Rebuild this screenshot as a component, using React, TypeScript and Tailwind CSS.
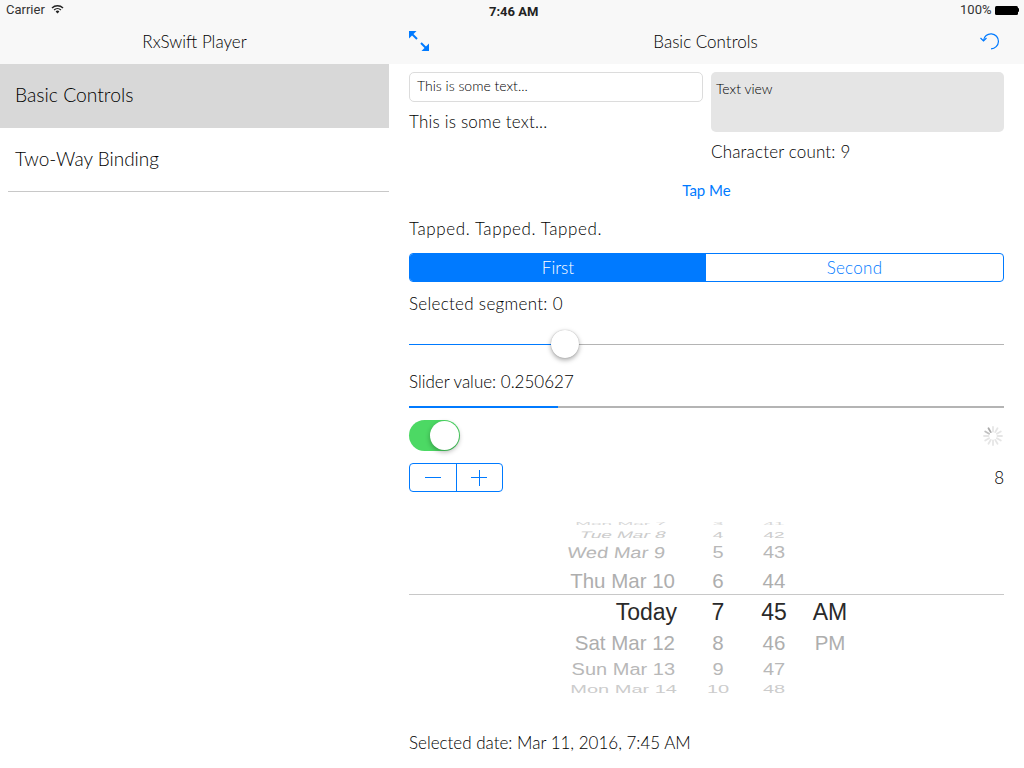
const font = "font-['Lato','Open_Sans',sans-serif] font-light";

const pickerRows = [
  { h: "h-[7px]", cls: "scale-y-[0.2] text-[#d8d8d8] text-[19px]", dateCls: "w-[257px]", date: "Mon Mar 7", hour: "3", min: "41", ap: "" },
  { h: "h-[14px]", cls: "scale-y-[0.5] text-[#cccccc] text-[19px]", dateCls: "w-[257px] -skew-x-12", date: "Tue Mar 8", hour: "4", min: "42", ap: "" },
  { h: "h-[24px]", cls: "scale-y-[0.78] text-[#b8b8b8] text-[20px]", dateCls: "w-[256px] -skew-x-6", date: "Wed Mar 9", hour: "5", min: "43", ap: "" },
  { h: "h-[32px]", cls: "scale-y-[0.95] text-[#aeaeae] text-[20.5px]", dateCls: "w-[266px]", date: "Thu Mar 10", hour: "6", min: "44", ap: "" },
  { h: "h-[30px]", cls: "text-[#2a2a2a] text-[23px]", dateCls: "w-[268px]", date: "Today", hour: "7", min: "45", ap: "AM" },
  { h: "h-[32px]", cls: "scale-y-[0.95] text-[#aeaeae] text-[20.5px]", dateCls: "w-[266px]", date: "Sat Mar 12", hour: "8", min: "46", ap: "PM" },
  { h: "h-[22px]", cls: "scale-y-[0.78] text-[#b8b8b8] text-[20px]", dateCls: "w-[266px]", date: "Sun Mar 13", hour: "9", min: "47", ap: "" },
  { h: "h-[16px]", cls: "scale-y-[0.5] text-[#cccccc] text-[20px]", dateCls: "w-[268px]", date: "Mon Mar 14", hour: "10", min: "48", ap: "" },
  { h: "h-[5px]", cls: "scale-y-[0.2] text-[#d8d8d8] text-[19px]", dateCls: "w-[264px]", date: "Tue Mar 15", hour: "11", min: "49", ap: "" },
];

function Spinner() {
  const spokes = Array.from({ length: 12 }, (_, i) => i);
  return (
    <svg width="20" height="20" viewBox="0 0 20 20">
      {spokes.map((i) => (
        <line
          key={i}
          x1="10"
          y1="1"
          x2="10"
          y2="5.5"
          stroke="#8e8e8e"
          strokeWidth="1.8"
          strokeLinecap="round"
          opacity={i === 11 ? 0.75 : i === 10 ? 0.55 : 0.22}
          transform={`rotate(${i * 30} 10 10)`}
        />
      ))}
    </svg>
  );
}

function DatePicker() {
  return (
    <div className="relative mt-[28px] h-[178px] overflow-hidden font-['Liberation_Sans',sans-serif] font-normal">
      <div className="flex flex-col">
        {pickerRows.map((r) => (
          <div key={r.date} className={`${r.h} flex items-center leading-none`}>
            <div className={`${r.cls} relative flex w-full items-center whitespace-nowrap`}>
              <div className="w-[268px] shrink-0">
                <div className={`${r.dateCls} text-right`}>{r.date}</div>
              </div>
              <span className="ml-[15px] w-[52px] text-center">{r.hour}</span>
              <span className="ml-[4px] w-[52px] text-center">{r.min}</span>
              <span className="ml-[4px] w-[52px] text-center">{r.ap}</span>
            </div>
          </div>
        ))}
      </div>
      <div className="absolute left-0 right-0 top-[74px] h-px bg-[#c8c8c8]" />
    </div>
  );
}

export default function App() {
  return (
    <div className={`flex h-[768px] w-[1024px] flex-col overflow-hidden bg-white text-black ${font}`}>
      {/* Status bar */}
      <div className="relative flex h-[20px] items-center justify-between bg-[#f8f8f8] pl-[6px] pr-[5px] text-[13px] font-normal">
        <div className="flex items-center gap-[6px]">
          <span className="font-['Roboto',sans-serif] text-[#333]">Carrier</span>
          <svg className="mb-[2px]" width="13" height="10" viewBox="0 0 13 10">
            <path d="M0.5 3.4a8.6 8.6 0 0 1 12 0l-1 1a7.2 7.2 0 0 0-10 0z" fill="#222" />
            <path d="M2.6 5.5a5.6 5.6 0 0 1 7.8 0l-1 1a4.2 4.2 0 0 0-5.8 0z" fill="#222" />
            <path d="M4.6 7.5a2.8 2.8 0 0 1 3.8 0L6.5 9.6z" fill="#222" />
          </svg>
        </div>
        <span className="absolute left-[489px] top-[2px] font-['Roboto',sans-serif] font-bold text-[#222]">7:46 AM</span>
        <div className="flex items-center gap-[3px]">
          <span className="font-['Roboto',sans-serif] text-[#333]">100%</span>
          <div className="flex items-center">
            <div className="h-[9px] w-[23px] rounded-[1.5px] bg-black" />
            <div className="h-[4px] w-[1.5px] rounded-r-sm bg-black" />
          </div>
        </div>
      </div>

      <div className="flex flex-1">
        {/* Master column */}
        <div className="w-[389px] shrink-0">
          <div className="flex h-[44px] items-center justify-center bg-[#f8f8f8] text-[17px]">RxSwift Player</div>
          <div className="flex h-[64px] items-center bg-[#d8d8d8] pb-[2px] pl-[15px] text-[19.3px]">Basic Controls</div>
          <div className="ml-[8px] flex h-[64px] items-center border-b border-[#c8c8c8] pl-[7px] text-[19px]">Two-Way Binding</div>
        </div>

        {/* Detail column */}
        <div className="flex flex-1 flex-col">
          <div className="flex h-[44px] items-center justify-between bg-[#f8f8f8] pl-[20px] pr-[24px] text-[17px]">
            <svg className="mb-[2px]" width="20" height="20" viewBox="0 0 20 20" fill="#007aff" stroke="#007aff">
              <path d="M0 0h7.5L0 7.5z" stroke="none" />
              <path d="M2 2l6 6" strokeWidth="2" />
              <path d="M20 20h-7.5l7.5-7.5z" stroke="none" />
              <path d="M18 18l-6-6" strokeWidth="2" />
            </svg>
            <span className="pl-[2px]">Basic Controls</span>
            <svg className="mb-[2px]" width="20" height="18" viewBox="0 0 20 18" fill="none" stroke="#007aff" strokeWidth="1.2">
              <path d="M3.5 8.5a7.5 7.5 0 1 1 7.5 8.3" />
              <path d="M0.5 6l3 3 3-3" />
            </svg>
          </div>

          <div className="flex flex-1 flex-col pl-[20px] pr-[20px] pt-[8px] text-[17px] leading-[20px]">
            <div className="flex gap-[8px]">
              <div className="w-[294px]">
                <div className="flex h-[30px] items-center rounded-[5px] border border-[#dcdcdc] pb-[2px] pl-[7px] text-[14px]">
                  This is some text...
                </div>
                <div className="mt-[10px] tracking-[0.2px]">This is some text...</div>
              </div>
              <div className="flex-1">
                <div className="h-[60px] rounded-[5px] bg-[#e5e5e5] pl-[5px] pt-[7px] text-[14px]">Text view</div>
                <div className="mt-[10px] tracking-[0.17px]">Character count: 9</div>
              </div>
            </div>

            <div className="mt-[18px] text-center text-[15px] font-normal text-[#007aff]">Tap Me</div>
            <div className="mt-[19px] tracking-[0.6px]">Tapped. Tapped. Tapped.</div>

            <div className="mt-[14px] flex h-[29px] overflow-hidden rounded-[4px] border border-[#007aff] text-[#007aff]">
              <div className="flex w-[296px] items-center justify-center bg-[#007aff] text-white">First</div>
              <div className="flex flex-1 items-center justify-center tracking-[0.3px]">Second</div>
            </div>

            <div className="mt-[12px] tracking-[0.3px]">Selected segment: 0</div>

            <div className="relative mt-[30px] flex h-[1px] bg-[#b4b4b4]">
              <div className="h-[1px] w-[142px] bg-[#007aff]" />
              <div className="absolute left-[142px] top-[-14px] size-[28px] rounded-full bg-white shadow-[0_2px_5px_rgba(0,0,0,0.35),0_0_1px_rgba(0,0,0,0.3)]" />
            </div>

            <div className="mt-[27px]">Slider value: 0.250627</div>

            <div className="mt-[14px] flex h-[2px] bg-[#b4b4b4]">
              <div className="w-[149px] bg-[#007aff]" />
            </div>

            <div className="mt-[12px] flex items-center justify-between">
              <div className="flex h-[31px] w-[51px] items-center justify-end rounded-full bg-[#4cd964] pr-[1px]">
                <div className="size-[29px] rounded-full bg-white shadow-[0_2px_5px_rgba(0,0,0,0.3)]" />
              </div>
              <div className="pr-[1px]">
                <Spinner />
              </div>
            </div>

            <div className="mt-[12px] flex items-center justify-between">
              <div className="flex h-[29px] w-[94px] rounded-[4px] border border-[#007aff] text-[#007aff]">
                <div className="flex flex-1 items-center justify-center border-r border-[#007aff]">
                  <div className="h-px w-[16px] bg-[#007aff]" />
                </div>
                <div className="relative flex flex-1 items-center justify-center">
                  <div className="h-px w-[16px] bg-[#007aff]" />
                  <div className="absolute h-[16px] w-px bg-[#007aff]" />
                </div>
              </div>
              <span>8</span>
            </div>

            <DatePicker />

            <div className="mt-[35px]">Selected date: Mar 11, 2016, 7:45 AM</div>
          </div>
        </div>
      </div>
    </div>
  );
}
